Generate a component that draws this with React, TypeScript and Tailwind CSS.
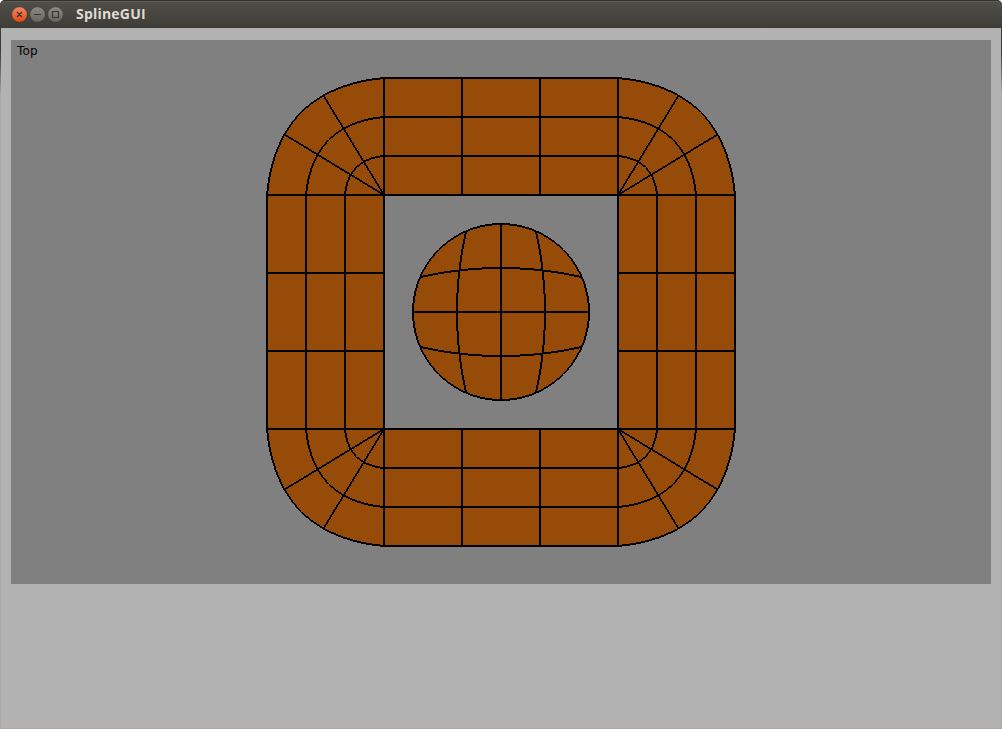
import React from "react";

type Pt = [number, number];

const CX = 501;
const CY = 312;
const BROWN = "#964b09";

function cubic(a: Pt, b: Pt, c: Pt, d: Pt, n = 24): Pt[] {
  return Array.from({ length: n + 1 }, (_, i) => {
    const t = i / n;
    const u = 1 - t;
    const f = (k: 0 | 1) =>
      u * u * u * a[k] + 3 * u * u * t * b[k] + 3 * u * t * t * c[k] + t * t * t * d[k];
    return [f(0), f(1)] as Pt;
  });
}

function quad(a: Pt, b: Pt, c: Pt, n = 16): Pt[] {
  return Array.from({ length: n + 1 }, (_, i) => {
    const t = i / n;
    const u = 1 - t;
    const f = (k: 0 | 1) => u * u * a[k] + 2 * u * t * b[k] + t * t * c[k];
    return [f(0), f(1)] as Pt;
  });
}

// Two pixels thick along the minor axis of each segment, like a rasterised wireframe.
function thick(points: Pt[]): string {
  let d = "";
  for (let i = 0; i + 1 < points.length; i++) {
    const [x0, y0] = points[i];
    const [x1, y1] = points[i + 1];
    const steep = Math.abs(y1 - y0) > Math.abs(x1 - x0);
    const ox = steep ? 1 : 0;
    const oy = steep ? 0 : 1;
    d += `M${x0 - ox} ${y0 - oy}L${x1 - ox} ${y1 - oy}L${x1 + ox} ${y1 + oy}L${x0 + ox} ${y0 + oy}Z`;
  }
  return d;
}

function corner(sx: number, sy: number, scale: number): Pt[] {
  const p = (x: number, y: number): Pt => [
    CX + sx * (117 + x * scale),
    CY + sy * (117 + y * scale),
  ];
  return cubic(p(117, 0), p(110.25, 71.25), p(71.25, 110.25), p(0, 117));
}

const signs: Pt[] = [
  [-1, -1],
  [1, -1],
  [1, 1],
  [-1, 1],
];

const lines: Pt[][] = [];
for (const [sx, sy] of signs) {
  for (const s of [1 / 3, 2 / 3, 1]) lines.push(corner(sx, sy, s));
  const o: Pt = [CX + sx * 117, CY + sy * 117];
  lines.push([o, [o[0] + sx * 99.5, o[1] + sy * 60.5]]);
  lines.push([o, [o[0] + sx * 60.5, o[1] + sy * 99.5]]);
}
for (const s of [-1, 1]) {
  for (const r of [117, 156, 195, 234]) {
    lines.push([[CX - 118, CY + s * r], [CX + 118, CY + s * r]]);
    lines.push([[CX + s * r, CY - 118], [CX + s * r, CY + 118]]);
  }
  for (const k of [-117, -39, 39, 117]) {
    lines.push([[CX + k, CY + s * 117], [CX + k, CY + s * 234]]);
    lines.push([[CX + s * 117, CY + k], [CX + s * 234, CY + k]]);
  }
  lines.push(quad([420.5, CY + s * 35], [CX, CY + s * 53], [581.5, CY + s * 35]));
  lines.push(quad([CX + s * 35, 231.5], [CX + s * 53, CY], [CX + s * 35, 392.5]));
}
lines.push([[413, CY], [589, CY]]);
lines.push([[CX, 224], [CX, 400]]);
lines.push(
  Array.from({ length: 73 }, (_, i) => {
    const a = (i * Math.PI) / 36;
    return [CX + 88 * Math.cos(a), CY + 88 * Math.sin(a)] as Pt;
  }),
);

const outer = signs
  .map(([sx, sy], i) => {
    const c = corner(sx, sy, 1);
    return i % 2 ? c.reverse() : c;
  })
  .flat();
const frame =
  "M" + outer.map((p) => p.join(" ")).join("L") + "ZM384 195L384 429L618 429L618 195Z";

function Wireframe() {
  return (
    <svg
      className="block"
      width="980"
      height="544"
      viewBox="11 40 980 544"
      shapeRendering="crispEdges"
    >
      <path d={frame} fill={BROWN} fillRule="evenodd" />
      <circle cx={CX} cy={CY} r="88" fill={BROWN} />
      {lines.map((l, i) => (
        <path key={i} d={thick(l)} fill="#000" />
      ))}
    </svg>
  );
}

function TitleBar() {
  return (
    <header className="flex h-7 shrink-0 items-center rounded-t-[5px] border-t border-[#33322e] bg-linear-to-b from-[#504f49] to-[#3d3c37] pl-[10px] shadow-[inset_0_1px_0_#5d5b54]">
      <svg width="56" height="20" viewBox="0 0 56 20" className="shrink-0">
        <defs>
          <linearGradient id="close" x1="0" y1="0" x2="0" y2="1">
            <stop offset="0" stopColor="#f58662" />
            <stop offset="1" stopColor="#e2490f" />
          </linearGradient>
          <linearGradient id="plain" x1="0" y1="0" x2="0" y2="1">
            <stop offset="0" stopColor="#8c8b83" />
            <stop offset="1" stopColor="#66655e" />
          </linearGradient>
        </defs>
        <circle cx="9.5" cy="9.5" r="7.8" fill="url(#close)" stroke="#35342f" strokeWidth="0.6" />
        <circle cx="27.5" cy="9.5" r="7.8" fill="url(#plain)" stroke="#35342f" strokeWidth="0.6" />
        <circle cx="45.5" cy="9.5" r="7.8" fill="url(#plain)" stroke="#35342f" strokeWidth="0.6" />
        <path
          d="M7 7l5 5M12 7l-5 5M24 9.5h7M42.5 6.5h6v6h-6z"
          fill="none"
          stroke="#35342f"
          strokeWidth="1.1"
        />
      </svg>
      <h1 className="mb-px ml-[10px] font-['Open_Sans',sans-serif] text-[14px] leading-5 font-bold tracking-[0.2px] whitespace-nowrap text-[#dfdbd2]">
        SplineGUI
      </h1>
    </header>
  );
}

export default function App() {
  return (
    <div className="h-[729px] w-[1002px] bg-white">
      <div className="flex h-full flex-col overflow-hidden rounded-t-[5px] bg-linear-to-b from-[#3c3b37] from-7% to-[#aaa8a2] to-13%">
        <TitleBar />
        <main className="mx-px mb-px grow bg-[#b2b2b2] px-[10px] pt-3">
          <section className="relative h-[544px] bg-[#808080]">
            <Wireframe />
            <span className="absolute top-[3px] left-[6px] font-['DejaVu_Sans',sans-serif] text-[12px] leading-4 tracking-[0.2px] text-black">
              Top
            </span>
          </section>
        </main>
      </div>
    </div>
  );
}
